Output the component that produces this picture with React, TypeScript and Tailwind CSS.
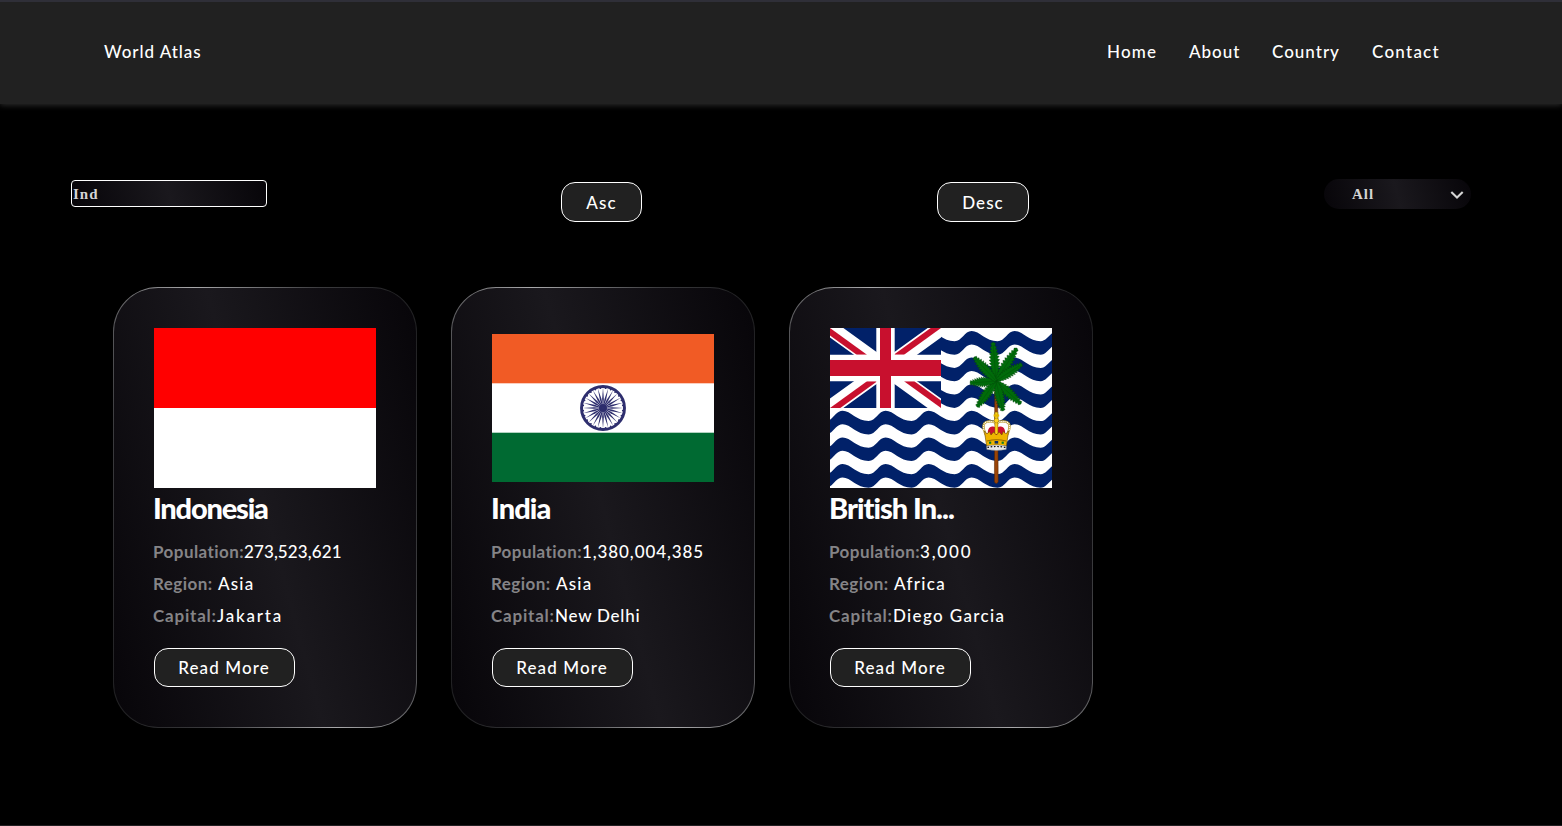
import type { ReactNode } from 'react';

const NAVY = '#012169';
const RED = '#c8102e';

function IndonesiaFlag() {
  return (
    <svg viewBox="0 0 222 160" className="block h-40 w-[222px]">
      <rect width="222" height="160" fill="#fff" />
      <rect width="222" height="80" fill="#f00" />
    </svg>
  );
}

function IndiaFlag() {
  const spokes = Array.from({ length: 24 }, (_, i) => i * 15);
  return (
    <svg viewBox="0 0 222 148" className="block h-[148px] w-[222px]">
      <rect width="222" height="148" fill="#fff" />
      <rect width="222" height="49.3" fill="#f15b25" />
      <rect y="98.7" width="222" height="49.3" fill="#006a32" />
      <g transform="translate(111 74)" fill="#2e2e6e">
        <circle r="21.5" fill="#fff" stroke="#2e2e6e" strokeWidth="2.9" />
        <circle r="4" />
        {spokes.map((a) => (
          <g key={a} transform={`rotate(${a})`}>
            <path d="M0 -20.4 L0.85 -9 L0.3 -2 L-0.3 -2 L-0.85 -9 Z" />
            <circle r="0.9" cx="2.6" cy="-19.8" />
          </g>
        ))}
      </g>
    </svg>
  );
}

function wave(y: number) {
  let top = `M-30.4 ${y}`;
  let back = '';
  for (let i = 0; i < 6; i++) {
    const x = -30.4 + i * 43;
    top += ` C${x + 8} ${y} ${x + 14} ${y + 10.3} ${x + 26} ${y + 10.3} C${x + 33} ${y + 10.3} ${x + 36} ${y} ${x + 43} ${y}`;
  }
  const b = y + 13.4;
  for (let i = 5; i >= 0; i--) {
    const x = -30.4 + i * 43;
    back += ` C${x + 36} ${b} ${x + 33} ${b + 10.3} ${x + 26} ${b + 10.3} C${x + 14} ${b + 10.3} ${x + 8} ${b} ${x} ${b}`;
  }
  return `${top} L227.6 ${b}${back} Z`;
}

const FRONDS: [number, number][] = [
  [163, 14], [187, 20], [192, 36], [191, 76], [173, 83], [147, 79], [140, 55], [144, 29],
];

function Frond({ x, y }: { x: number; y: number }) {
  const dx = x - 166;
  const dy = y - 53;
  const len = Math.hypot(dx, dy);
  const angle = (Math.atan2(dy, dx) * 180) / Math.PI;
  let d = 'M0 -1.6';
  const steps = 12;
  const width = (i: number) => 3.8 * Math.sin(Math.PI * Math.pow(i / steps, 0.9)) + 1.5;
  for (let i = 1; i < steps; i++) {
    const t = (i / steps) * len;
    d += ` L${t - 0.8} ${-width(i) * 0.6} L${t + 1.6} ${-width(i)}`;
  }
  d += ` L${len} 0`;
  for (let i = steps - 1; i > 0; i--) {
    const t = (i / steps) * len;
    d += ` L${t + 1.6} ${width(i)} L${t - 0.8} ${width(i) * 0.6}`;
  }
  return (
    <g transform={`translate(166 53) rotate(${angle})`}>
      <path d={`${d} L0 1.6 Z`} fill="#006b0a" stroke="#00400a" strokeWidth="0.35" />
      <path d={`M0 0 H${len - 3}`} stroke="#004d08" strokeWidth="0.4" />
    </g>
  );
}

function BiotFlag() {
  return (
    <svg viewBox="0 0 222 160" className="block h-40 w-[222px]">
      <rect width="222" height="160" fill="#fff" />
      {[3, 29.6, 56.2, 82.8, 109.4, 136].map((y) => (
        <path key={y} d={wave(y)} fill={NAVY} />
      ))}
      <svg width="111" height="80" viewBox="0 0 111 80">
        <rect width="111" height="80" fill={NAVY} />
        <path d="M0 0 L111 80 M111 0 L0 80" stroke="#fff" strokeWidth="15.6" />
        <g fill={RED}>
          <path d="M0 0 L37 26.7 H26.7 L0 7.4 Z" />
          <path d="M0 80 L37 53.3 H47.3 L10.3 80 Z" />
          <path d="M111 0 L74 26.7 H63.7 L100.7 0 Z" />
          <path d="M111 80 L74 53.3 H84.3 L111 72.6 Z" />
        </g>
        <path d="M55.5 0 V80" stroke="#fff" strokeWidth="18.4" />
        <path d="M0 40 H111" stroke="#fff" strokeWidth="26.6" />
        <path d="M55.5 0 V80" stroke={RED} strokeWidth="11" />
        <path d="M0 40 H111" stroke={RED} strokeWidth="16" />
      </svg>
      <path d="M164.8 53 H167.6 L168.2 154 Q166.3 157 164.4 154 Z" fill="#9a4408" stroke="#4d2204" strokeWidth="0.5" />
      {FRONDS.map(([x, y]) => (
        <Frond key={`${x}-${y}`} x={x} y={y} />
      ))}
      <g strokeLinejoin="round">
        <path d="M157 109 C151 98 153 93 160 93 C163 93 165 94 166.3 96 C168 94 170 93 173 93 C180 93 182 98 176 109 Z" fill="#fff" stroke="#6b5a10" strokeWidth="0.4" />
        <path d="M158 109 C157 102 159 98 163 98.5 C165 98.5 166 100 166.3 101 C167 100 168 98.5 170 98.5 C174 98 176 102 175 109 Z" fill={RED} />
        <path d="M157 109 C151 98 153 93.4 160 93.4 C163.5 93.4 166.3 95 166.3 98 M176 109 C182 98 180 93.4 173 93.4 C169.5 93.4 166.3 95 166.3 98" fill="none" stroke="#b99a2a" strokeWidth="2.4" />
        <path d="M157 109 C151 98 153 93.4 160 93.4 C163.5 93.4 166.3 95 166.3 98 M176 109 C182 98 180 93.4 173 93.4 C169.5 93.4 166.3 95 166.3 98" fill="none" stroke="#fff" strokeWidth="1.2" strokeDasharray="1.2 0.7" />
        <path d="M166.4 84 V106" stroke="#8a6a00" strokeWidth="3.6" />
        <path d="M166.4 84.4 V106" stroke="#ffd21a" strokeWidth="2.4" />
        <path d="M163.6 87.5 H169.2" stroke="#e5b800" strokeWidth="2.2" />
        <circle cx="166.4" cy="92.5" r="2.3" fill="#ffd21a" stroke="#8a6a00" strokeWidth="0.4" />
        <path d="M154.4 103 L157 106 L159.5 103.5 L161 107 L163.5 104 L166.4 107 L169.3 104 L171.8 107 L173.3 103.5 L175.8 106 L178.6 103 L176.4 118 Q166.4 116 156.6 118 Z" fill="#efb400" stroke="#6b4a00" strokeWidth="0.6" />
        <path d="M157 113 Q166.4 110.5 176 113" fill="none" stroke="#9a6a00" strokeWidth="1.2" />
        <rect x="164.6" y="113" width="3.6" height="2.6" fill="#0a2f6b" />
        <rect x="159" y="113.6" width="2.2" height="2.2" fill="#0a7a2a" />
        <rect x="171.6" y="113.6" width="2.2" height="2.2" fill="#0a7a2a" />
        <path d="M156.6 118 Q166.4 115.8 176.4 118 L176.2 121.5 Q166.4 123.5 156.8 121.5 Z" fill="#e8e8e8" stroke="#777" strokeWidth="0.4" />
        <path d="M157.4 119.4 Q166.4 117.6 175.8 119.4" fill="none" stroke="#111" strokeWidth="1.2" strokeDasharray="1.6 1.7" />
      </g>
    </svg>
  );
}

type Value = { text: string; className: string };

type CardProps = {
  flag: ReactNode;
  name: string;
  nameClass: string;
  population: Value;
  region: Value;
  capital: Value;
};

function Card({ flag, name, nameClass, population, region, capital }: CardProps) {
  return (
    <article className="h-[441px] w-[304px] rounded-[45px] bg-[linear-gradient(72deg,#1d1d1f,#3c3c3f_22%,#a9a9ab_50%,#3c3c3f_78%,#1d1d1f)] p-px">
      <div className="flex h-full flex-col items-start rounded-[44px] bg-[linear-gradient(75deg,#070509,#1a181d_50%,#070509)] pt-10 pl-10">
        <div className="flex h-40 items-center">{flag}</div>
        <h2 className={`mb-2 -ml-px h-10 text-[29px] leading-10 font-black whitespace-nowrap text-white ${nameClass}`}>{name}</h2>
        <div className="-ml-px font-medium">
          <p className="flex h-8 leading-8">
            <b className="w-[91px] tracking-[0.45px] text-[#858487]">Population:</b>
            <span className={population.className}>{population.text}</span>
          </p>
          <p className="flex h-8 leading-8">
            <b className="w-[65px] tracking-[0.45px] text-[#858487]">Region:</b>
            <span className={region.className}>{region.text}</span>
          </p>
          <p className="flex h-8 leading-8">
            <b className="w-[64px] tracking-[0.8px] text-[#858487]">Capital:</b>
            <span className={capital.className}>{capital.text}</span>
          </p>
        </div>
        <button className="mt-4 h-[39px] w-[141px] rounded-[14px] border border-white bg-[#212121] pt-px pr-px font-medium tracking-[1.1px]">
          Read More
        </button>
      </div>
    </article>
  );
}

export default function App() {
  return (
    <div className="flex h-[826px] flex-col overflow-hidden border-b border-[#221f22] bg-black font-['Lato',sans-serif] text-[17px] text-white">
      <header className="flex h-[104px] shrink-0 items-center justify-between border-t-2 border-[#2f2f38] bg-[#212121] pb-0.5 pl-[104px] font-medium shadow-[0_1px_6px_#2f2f2f]">
        <span className="tracking-[0.95px]">World Atlas</span>
        <nav className="flex w-[455px]">
          <a className="w-[82px] tracking-[1.2px]">Home</a>
          <a className="w-[83px] tracking-[1px]">About</a>
          <a className="w-[100px] tracking-[1px]">Country</a>
          <a className="tracking-[1.25px]">Contact</a>
        </nav>
      </header>

      <section className="mt-[75px] flex h-[43px] items-start justify-between pr-[91px] pl-[71px]">
        <input
          className="mt-px h-[27px] w-[196px] rounded-[4px] border border-white bg-[linear-gradient(75deg,#070509,#1a181d_50%,#070509)] pt-0.5 pl-px font-['Liberation_Serif',serif] text-[15px] font-bold tracking-[1px] text-[#d4d4d4] outline-none"
          defaultValue="Ind"
        />
        <button className="mt-[3px] -ml-px h-10 w-[81px] rounded-[14px] border border-white bg-[#212121] pt-px font-medium tracking-[1.1px]">Asc</button>
        <button className="mt-[3px] h-10 w-[92px] rounded-[14px] border border-white bg-[#212121] pt-px font-medium tracking-[1.1px]">Desc</button>
        <div className="flex h-[30px] w-[147px] items-center justify-between rounded-[15px] bg-[linear-gradient(75deg,#070509,#1a181d_50%,#070509)] pr-[7px] pl-7 font-['Liberation_Serif',serif] text-[15px] font-bold tracking-[1px] text-[#d4d4d4]">
          <span>All</span>
          <svg width="14" height="10" viewBox="0 0 14 10" fill="none" className="mt-px">
            <path d="M1.3 2 L7 7.6 L12.7 2" stroke="#d4d4d4" strokeWidth="2.1" />
          </svg>
        </div>
      </section>

      <main className="mt-[65px] flex gap-[34px] pl-[113px]">
        <Card
          flag={<IndonesiaFlag />}
          name="Indonesia"
          nameClass="tracking-[-1.2px]"
          population={{ text: '273,523,621', className: 'tracking-[0.1px]' }}
          region={{ text: 'Asia', className: 'tracking-[1.2px]' }}
          capital={{ text: 'Jakarta', className: 'tracking-[1.8px]' }}
        />
        <Card
          flag={<IndiaFlag />}
          name="India"
          nameClass="tracking-[-0.9px]"
          population={{ text: '1,380,004,385', className: 'tracking-[0.9px]' }}
          region={{ text: 'Asia', className: 'tracking-[1.2px]' }}
          capital={{ text: 'New Delhi', className: 'tracking-[0.75px]' }}
        />
        <Card
          flag={<BiotFlag />}
          name="British In..."
          nameClass="tracking-[-1px]"
          population={{ text: '3,000', className: 'tracking-[1.8px]' }}
          region={{ text: 'Africa', className: 'tracking-[1.3px]' }}
          capital={{ text: 'Diego Garcia', className: 'tracking-[1.35px]' }}
        />
      </main>
    </div>
  );
}
